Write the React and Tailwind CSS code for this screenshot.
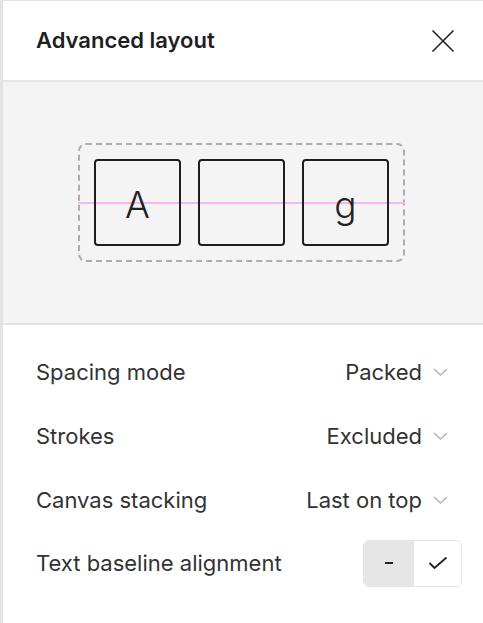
import React from 'react';

const font = { fontFamily: 'Inter, "Noto Sans", sans-serif' };

const Chevron = () => (
  <svg width="15" height="8" viewBox="0 0 15 8" fill="none" className="ml-[11px]">
    <path d="M1 1l6.5 6L14 1" stroke="#b4b4b4" strokeWidth="1.4" />
  </svg>
);

const SelectRow = ({ label, value }) => (
  <div className="flex items-center justify-between h-16">
    <span className="text-[22px] text-[#333]">{label}</span>
    <div className="flex items-center mr-[14px]">
      <span className="text-[22px] text-[#333]">{value}</span>
      <Chevron />
    </div>
  </div>
);

const Box = ({ children }) => (
  <div className="w-[87px] h-[87px] border-2 border-[#1e1e1e] rounded-[4px] flex items-center justify-center pt-[3px] relative z-10">
    <span className="text-[37px] font-light text-[#222] leading-none">{children}</span>
  </div>
);

export default function App() {
  return (
    <div className="min-h-screen flex bg-[#e3e3e3]" style={font}>
      <div className="w-[3px] shrink-0" />
      <div className="flex-1 flex flex-col bg-white mt-px">
        {/* Header */}
        <div className="h-[79px] flex items-center justify-between pl-[33px] pr-[28px]">
          <h1 className="text-[22px] font-semibold text-[#1f1f1f]">Advanced layout</h1>
          <svg width="24" height="24" viewBox="0 0 24 24" fill="none">
            <path d="M1.5 1.5l21 21M22.5 1.5l-21 21" stroke="#222" strokeWidth="1.6" />
          </svg>
        </div>

        {/* Preview */}
        <div className="h-[245px] bg-[#f4f4f4] border-y-2 border-[#e5e5e5] flex items-center justify-center pr-[3px]">
          <div className="relative w-[327px] h-[119px] border-2 border-dashed border-[#acacac] rounded-[8px] flex items-center justify-center gap-[17px]">
            <div className="absolute left-[-2px] right-[-2px] top-[57px] h-[2px] bg-[#f8b6ec]" />
            <Box>A</Box>
            <Box />
            <Box>g</Box>
          </div>
        </div>

        {/* Options */}
        <div className="pt-[15px] pl-[33px] pr-[21px]">
          <SelectRow label="Spacing mode" value="Packed" />
          <SelectRow label="Strokes" value="Excluded" />
          <SelectRow label="Canvas stacking" value="Last on top" />
          <div className="flex items-center justify-between h-[62px]">
            <span className="text-[22px] text-[#333]">Text baseline alignment</span>
            <div className="flex h-[47px] w-[99px] rounded-[6px] border border-[#e4e4e4] overflow-hidden">
              <div className="w-[50px] bg-[#e6e6e6] flex items-center justify-center">
                <span className="w-[8px] h-[2px] bg-[#222]" />
              </div>
              <div className="flex-1 bg-white flex items-center justify-center">
                <svg width="20" height="14" viewBox="0 0 20 14" fill="none">
                  <path d="M1.5 7l5 5L18.5 1.5" stroke="#222" strokeWidth="1.8" />
                </svg>
              </div>
            </div>
          </div>
        </div>
      </div>
    </div>
  );
}
